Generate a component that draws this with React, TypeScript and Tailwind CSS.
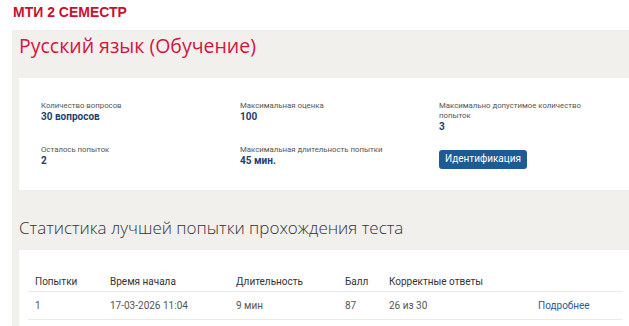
import React from "react";

const info = [
  { label: "Количество вопросов", value: "30 вопросов" },
  { label: "Максимальная оценка", value: "100" },
  { label: "Максимально допустимое количество\nпопыток", value: "3" },
  { label: "Осталось попыток", value: "2" },
  { label: "Максимальная длительность попытки", value: "45 мин." },
];

const cols = ["w-[75px]", "w-[126px]", "w-[109px]", "w-[44px]", "w-[149px]", "flex-1"];

export default function App() {
  return (
    <div className="w-[629px] h-[326px] overflow-hidden bg-white font-['Open_Sans',sans-serif] text-[#333]">
      <div className="h-[30px] pl-[13px] pt-[4px] font-['Liberation_Sans',Arial,sans-serif] font-bold text-[14px] leading-[16px] text-[#c8102e]">
        МТИ 2 СЕМЕСТР
      </div>

      <div className="ml-[12px] bg-[#f2f0ed] pl-[7px]">
        <div className="h-[48px] pt-[4px]">
          <h1 className="text-[19.5px] font-normal text-[#d3163f] leading-[24px]">Русский язык (Обучение)</h1>
        </div>

        <div className="bg-white h-[112px] pl-[22px] pt-[23px] font-['Roboto',sans-serif]">
          <div className="grid grid-cols-[199px_199px_170px] gap-y-[12px]">
            {info.map((it) => (
              <InfoItem key={it.label} {...it} />
            ))}
            <div>
              <button className="h-[19px] w-[88px] rounded-[3px] bg-[#1e5a94] text-white text-[10px] leading-none">
                Идентификация
              </button>
            </div>
          </div>
        </div>

        <div className="h-[60px] pt-[29px]">
          <h2 className="text-[17px] font-light text-[#333] leading-none">Статистика лучшей попытки прохождения теста</h2>
        </div>

        <div className="bg-white pt-[22px] pl-[9px] pr-[7px] h-[100px] font-['Roboto',sans-serif] text-[10px]">
          <div className="flex h-[20px] items-center border-b border-[#eceae7] text-[#333]">
            {["Попытки", "Время начала", "Длительность", "Балл", "Корректные ответы", ""].map((h, i) => (
              <div key={i} className={`${cols[i]} pl-[7px]`}>{h}</div>
            ))}
          </div>
          <div className="flex h-[28px] items-center border-b border-[#eceae7] text-[#555]">
            {["1", "17-03-2026 11:04", "9 мин", "87", "26 из 30"].map((c, i) => (
              <div key={i} className={`${cols[i]} pl-[7px]`}>{c}</div>
            ))}
            <div className="flex-1 pl-[7px] text-[#2c5aa0]">Подробнее</div>
          </div>
        </div>
      </div>
    </div>
  );
}

function InfoItem({ label, value }: { label: string; value: string }) {
  return (
    <div>
      <div className="text-[7.8px] leading-[10px] text-[#555] whitespace-pre-line">{label}</div>
      <div className="text-[10px] leading-[12px] font-bold text-[#1d3f70]">{value}</div>
    </div>
  );
}
